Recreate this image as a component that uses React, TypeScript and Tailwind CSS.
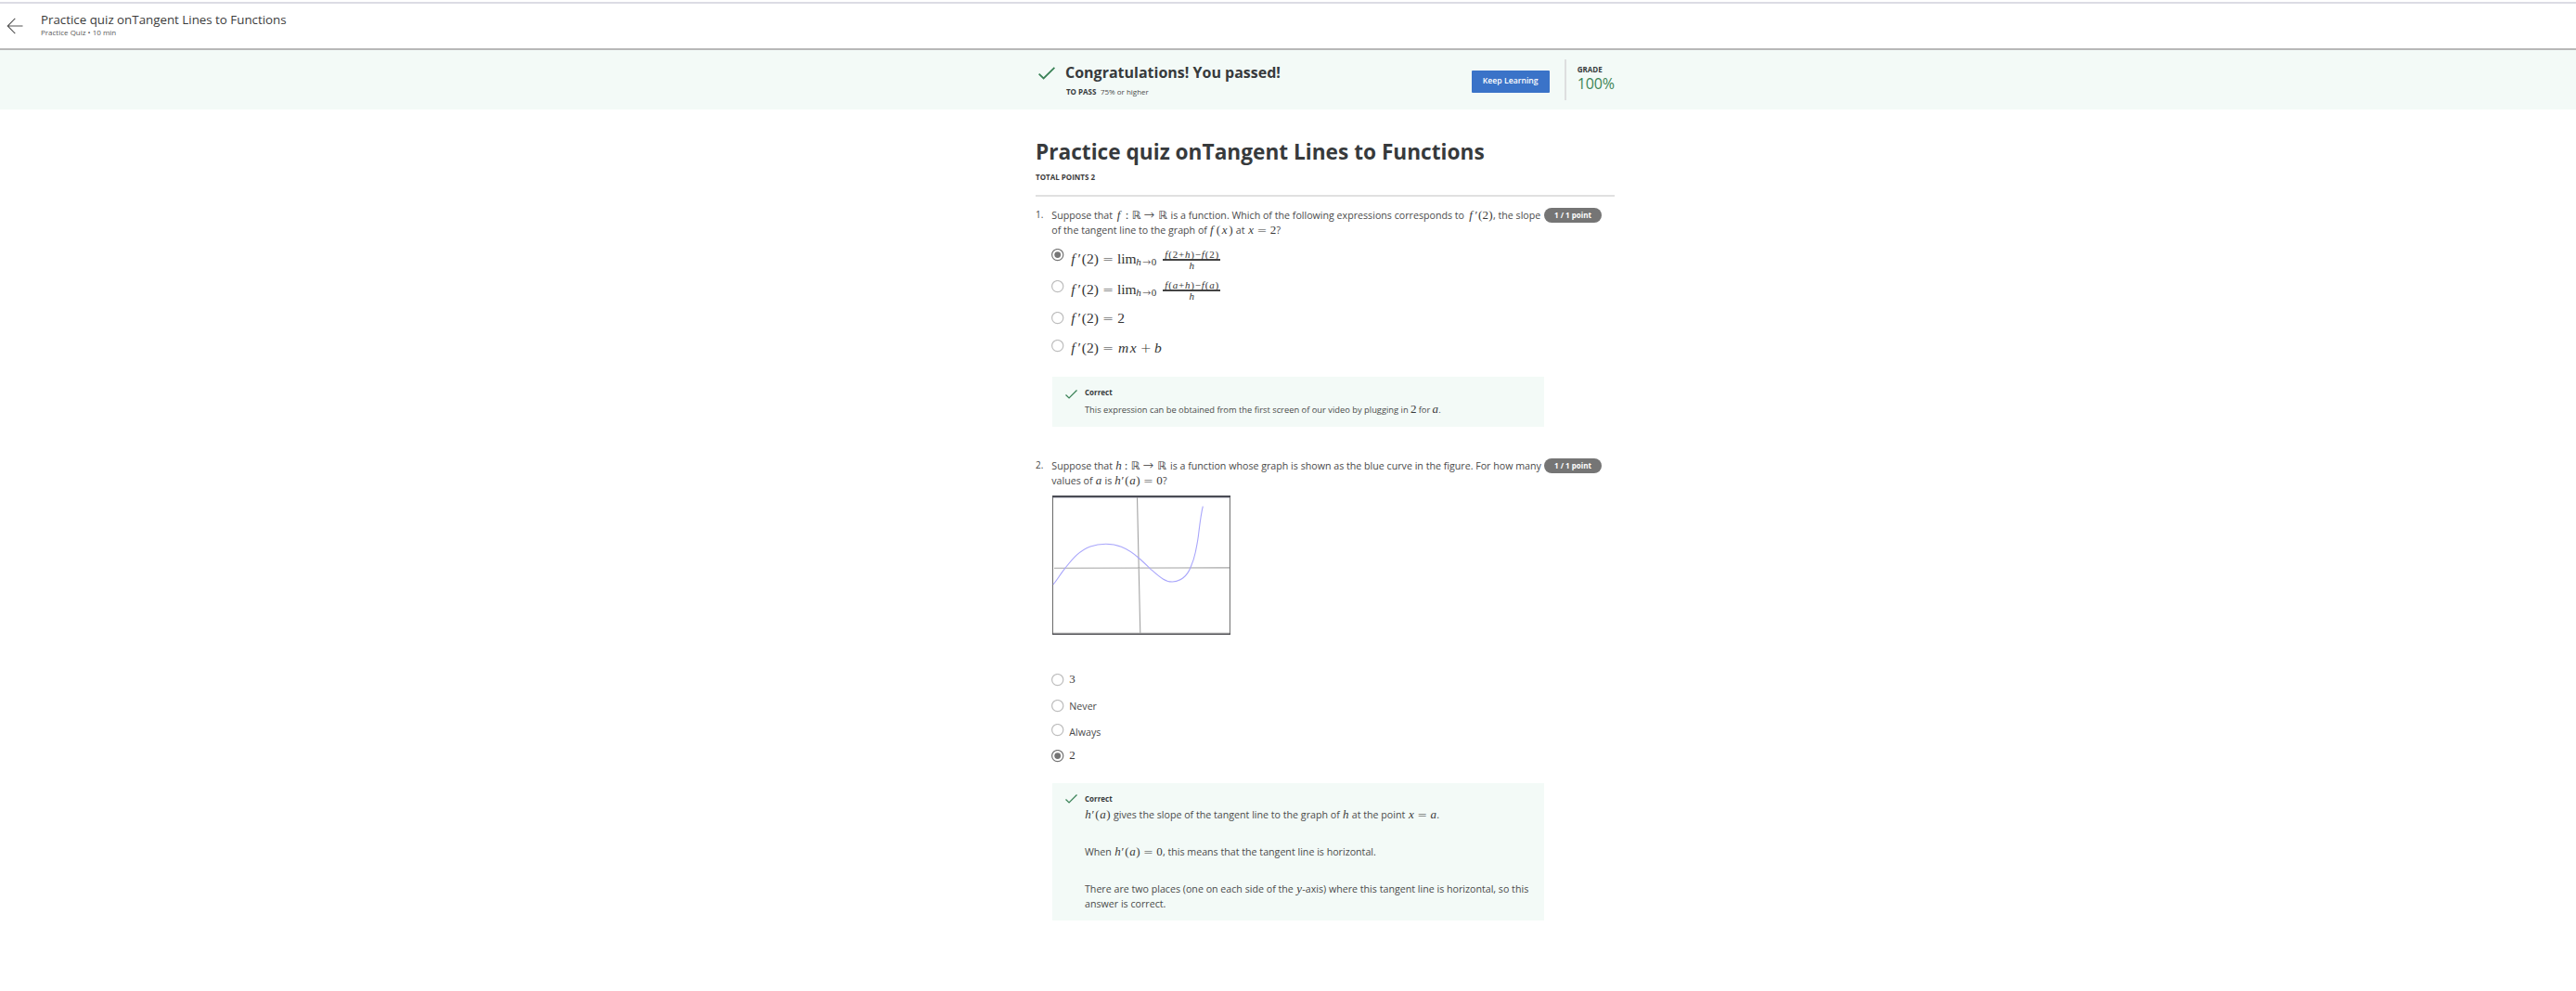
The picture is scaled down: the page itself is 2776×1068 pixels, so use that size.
import React from 'react';

type Kids = { children?: React.ReactNode; className?: string };

/* One glyph group of a formula, centred in a box of fixed width. */
const G = ({ children, className = '' }: Kids) => (
  <span className={`inline-flex shrink-0 justify-center whitespace-nowrap ${className}`}>{children}</span>
);

/* Thin-stroked operators and relations. */
const Op = ({ children, className = '' }: Kids) => (
  <G className={`font-['DejaVu_Sans',sans-serif] font-extralight ${className}`}>{children}</G>
);

const MathRun = ({ children, className = '' }: Kids) => (
  <span className={`flex shrink-0 items-baseline font-['Liberation_Serif',serif] text-[13px] leading-[14px] text-[#3a3a3a] ${className}`}>
    {children}
  </span>
);

const Txt = ({ children, className = '' }: Kids) => (
  <span className={`shrink-0 whitespace-nowrap ${className}`}>{children}</span>
);

const Line = ({ children, className = '' }: Kids) => (
  <div className={`flex h-4 items-baseline leading-4 ${className}`}>{children}</div>
);

const Check = ({ className = '' }: Kids) => (
  <svg viewBox="0 0 18 14" className={className} fill="none" stroke="#3a8257" strokeWidth="1.8">
    <path d="M0.6 7.6 L5.6 12.4 L17.4 0.8" />
  </svg>
);

const Radio = ({ checked }: { checked?: boolean }) => (
  <svg viewBox="0 0 14 14" className="h-[14px] w-[14px] shrink-0" fill="none">
    <circle cx="6.7" cy="6.6" r="6.1" stroke={checked ? '#757575' : '#bdbdbd'} strokeWidth="1.2" />
    {checked && <circle cx="6.7" cy="6.6" r="3.4" fill="#757575" />}
  </svg>
);

const Pill = () => (
  <div className="flex h-4 w-[62px] shrink-0 justify-center rounded-full bg-[#757575] text-[8px] leading-[15px] font-bold text-white">
    1 / 1 point
  </div>
);

const Reals = () => (
  <>
    <G className="w-[7px]">:</G>
    <G className="w-[13px] font-['DejaVu_Sans',sans-serif] text-[12px]">ℝ</G>
    <Op className="w-[15px] text-[14px]">→</Op>
    <G className="w-[14px] font-['DejaVu_Sans',sans-serif] text-[12px]">ℝ</G>
  </>
);

const FPrime = () => (
  <>
    <G className="w-[9px] italic">f</G>
    <G className="w-[5px]">′</G>
    <G className="w-[5px]">(</G>
    <G className="w-[8px]">2</G>
    <G className="w-[5px]">)</G>
    <Op className="w-[20.5px] text-[14.5px]">=</Op>
  </>
);

const HPrime = () => (
  <>
    <G className="w-[7px] italic">h</G>
    <G className="w-[4px]">′</G>
    <G className="w-[5px]">(</G>
    <G className="w-[7px] italic">a</G>
    <G className="w-[5px]">)</G>
  </>
);

const BigMath = ({ children, className = '' }: Kids) => (
  <span className={`ml-[4.5px] flex h-4 items-baseline font-['Liberation_Serif',serif] text-[15.5px] leading-4 text-[#333] ${className}`}>
    {children}
  </span>
);

const LimitOf = ({ arg }: { arg: string }) => (
  <>
    <FPrime />
    <G className="w-[20px]">lim</G>
    <span className="relative top-[2px] flex w-[22px] items-baseline justify-between text-[11px]">
      <i>h</i>
      <Op className="text-[11px]">→</Op>
      <span>0</span>
    </span>
    <span className="relative -top-[6px] ml-[7px] flex w-[62px] flex-col text-[11px] leading-[10px]">
      <span className="flex h-[12px] justify-between border-b-2 border-[#444] px-[2px]">
        <i>f</i>
        <span>(</span>
        <span className={arg === 'a' ? 'italic' : ''}>{arg}</span>
        <span>+</span>
        <i>h</i>
        <span>)</span>
        <span>−</span>
        <i>f</i>
        <span>(</span>
        <span className={arg === 'a' ? 'italic' : ''}>{arg}</span>
        <span>)</span>
      </span>
      <i className="-mb-3 text-center leading-[10px]">h</i>
    </span>
  </>
);

const Graph = () => (
  <svg viewBox="0 0 192 150" className="mt-2 block h-[150px] w-[192px]" fill="none">
    <path d="M0.5 0V150M191.4 0V150" stroke="#6a6a6a" strokeWidth="1" />
    <path d="M1 2.4H191" stroke="#b5b5c0" strokeWidth="0.8" />
    <path d="M0 1H192" stroke="#4a4c54" strokeWidth="1.8" />
    <path d="M1 148.2H191" stroke="#aaa" strokeWidth="0.8" />
    <path d="M0 149.3H192" stroke="#3c3c40" strokeWidth="1.3" />
    <path d="M91.5 2L94.8 149M2 78.3L191 77.9" stroke="#a3a3a3" strokeWidth="1.1" />
    <path
      d="M1 96C5 91 9 84.5 14.3 77.7C18 73 21.5 68.5 26 64.3C31 60 35.5 57 41 55C46.500 53 52 52.3 57.7 52.3C63.500 52.300 69 53.2 74.3 55.3C81 58 87 62 92.7 67C97.500 71 101.500 75 106 79.3C110.500 83.300 114.500 87 119.3 90C122.500 92.300 126 93 129.3 93C133.500 93 137.500 91.500 141 88.7C144.500 86 147.500 81.500 149.3 76.7C151.500 71.500 153.200 66.500 154.3 61C155.700 54 157 48 157.7 41C158.800 32 160.200 20 162.3 11.7"
      stroke="#a9a6fb"
      strokeWidth="1.1"
    />
  </svg>
);

export default function App() {
  return (
    <div className="flex h-[1068px] w-[2776px] flex-col overflow-hidden bg-white font-['Open_Sans',sans-serif] text-[10.67px] text-[#4a4a4a]">
      <header className="mt-[2px] flex h-[52px] shrink-0 border-t-2 border-b-2 border-t-[#dcdce4] border-b-[#b8b8b8]">
        <svg viewBox="0 0 18 18" className="mt-[15px] ml-[7px] h-[18px] w-[18px]" fill="none" stroke="#555" strokeWidth="1.1">
          <path d="M17.5 9H1.2M9.3 0.9L1.2 9L9.3 17.1" />
        </svg>
        <div className="ml-[19px] flex flex-col">
          <h1 className="mt-[9px] text-[13.33px] leading-4 text-[#3c3c3c]">Practice quiz onTangent Lines to Functions</h1>
          <p className="text-[8px] leading-3 text-[#5a5a5a]">Practice Quiz • 10 min</p>
        </div>
      </header>

      <section className="flex h-16 shrink-0 bg-[#f3faf7]">
        <div className="ml-[1116px] flex w-[624px]">
          <Check className="mt-[18px] ml-[3px] h-[14px] w-[18px]" />
          <div className="ml-[11px] w-[438px]">
            <h2 className="mt-[14px] text-[16px] leading-5 font-bold text-[#373a3c]">Congratulations! You passed!</h2>
            <p className="mt-[5px] flex gap-[4.5px] pl-[1px] text-[8px] leading-3">
              <b className="text-[#373a3c]">TO PASS</b>
              <span>75% or higher</span>
            </p>
          </div>
          <button className="mt-[22px] h-6 w-[84px] rounded-[1px] bg-[#3a73c8] pb-[2px] text-[8.67px] font-semibold text-white">
            Keep Learning
          </button>
          <div className="mt-[10px] ml-4 h-11 w-[2px] bg-[#dedfdf]" />
          <div className="ml-[12px]">
            <div className="mt-[15px] text-[8px] leading-3 font-bold text-[#373a3c]">GRADE</div>
            <div className="-mt-px text-[16px] leading-5 tracking-[-0.1px] text-[#3d8456]">100%</div>
          </div>
        </div>
      </section>

      <main className="ml-[1116px] flex w-[624px] flex-col">
        <h1 className="mt-[31px] h-[30px] text-[22.67px] leading-[30px] font-bold whitespace-nowrap text-[#373a3c]">
          Practice quiz onTangent Lines to Functions
        </h1>
        <p className="mt-[6px] text-[8px] leading-3 font-bold text-[#3c3c3c]">TOTAL POINTS 2</p>
        <div className="mt-[13px] h-[2px] bg-[#e0e0e0]" />

        <section className="mt-3 flex">
          <div className="w-[17.3px] shrink-0 text-[10px] leading-[15px]">1.</div>
          <div className="w-[530.7px] shrink-0">
            <Line>
              <Txt className="w-[67.7px]">Suppose that</Txt>
              <MathRun>
                <G className="w-[9px] italic">f</G>
                <G className="w-[1px]" />
                <Reals />
              </MathRun>
              <Txt className="w-[321px] pl-[1.5px]">is a function. Which of the following expressions corresponds to</Txt>
              <MathRun>
                <G className="w-[8px] italic">f</G>
                <G className="w-[4px]">′</G>
                <G className="w-[4.5px]">(</G>
                <G className="w-[6.5px]">2</G>
                <G className="w-[5px]">)</G>
              </MathRun>
              <Txt>, the slope</Txt>
            </Line>
            <Line>
              <Txt className="w-[168px]">of the tangent line to the graph of</Txt>
              <MathRun>
                <G className="w-[9px] italic">f</G>
                <G className="w-[5px]">(</G>
                <G className="w-[8.5px] italic">x</G>
                <G className="w-[5px]">)</G>
              </MathRun>
              <Txt className="pr-[3px] pl-[3px]">at</Txt>
              <MathRun>
                <G className="w-[7px] italic">x</G>
                <Op className="w-[17px] text-[13px]">=</Op>
                <G className="w-[7px]">2</G>
              </MathRun>
              <Txt>?</Txt>
            </Line>

            <div className="mt-3 flex h-[34px]">
              <Radio checked />
              <BigMath className="mt-[3px]">
                <LimitOf arg="2" />
              </BigMath>
            </div>
            <div className="flex h-[34px]">
              <Radio />
              <BigMath className="mt-[2px]">
                <LimitOf arg="a" />
              </BigMath>
            </div>
            <div className="flex h-[30px]">
              <Radio />
              <BigMath className="-mt-px">
                <FPrime />
                <G>2</G>
              </BigMath>
            </div>
            <div className="flex h-10">
              <Radio />
              <BigMath className="mt-[1px]">
                <FPrime />
                <G className="w-[12.5px] italic">m</G>
                <G className="w-[9px] italic">x</G>
                <Op className="w-[18px] text-[14.5px]">+</Op>
                <G className="w-[8px] italic">b</G>
              </BigMath>
            </div>

            <div className="ml-[0.7px] flex h-[54px] bg-[#f3faf7]">
              <Check className="mt-[14px] ml-[14.5px] h-[10px] w-[13px]" />
              <div className="ml-[7.5px] pt-[11px]">
                <div className="text-[8px] leading-3 font-bold text-[#373a3c]">Correct</div>
                <Line className="mt-[5px] text-[9.33px]">
                  <Txt>This expression can be obtained from the first screen of our video by plugging in</Txt>
                  <MathRun className="text-[12px]">
                    <G className="w-[11px]">2</G>
                  </MathRun>
                  <Txt>for</Txt>
                  <MathRun className="text-[12px]">
                    <G className="w-[9px] pl-[2px] italic">a</G>
                  </MathRun>
                  <Txt>.</Txt>
                </Line>
              </div>
            </div>
          </div>
          <Pill />
        </section>

        <section className="mt-[34px] flex">
          <div className="w-[17.3px] shrink-0 text-[10px] leading-[15px]">2.</div>
          <div className="w-[530.7px] shrink-0">
            <Line>
              <Txt className="w-[67.7px]">Suppose that</Txt>
              <MathRun>
                <G className="w-[9px] italic">h</G>
                <Reals />
              </MathRun>
              <Txt className="pl-[2px]">
                is a function whose graph is shown as the blue curve in the figure. For how many
              </Txt>
            </Line>
            <Line>
              <Txt>values of</Txt>
              <MathRun>
                <G className="w-[13px] italic">a</G>
              </MathRun>
              <Txt className="pr-[2.5px]">is</Txt>
              <MathRun>
                <HPrime />
                <Op className="w-[17px] text-[13px]">=</Op>
                <G className="w-[7px]">0</G>
              </MathRun>
              <Txt>?</Txt>
            </Line>
            <div className="pl-[0.7px]">
              <Graph />
            </div>

            <div className="mt-[42px] flex h-7">
              <Radio />
              <MathRun className="-mt-[1px] ml-[5px] h-4 leading-4">3</MathRun>
            </div>
            <div className="flex h-[26px]">
              <Radio />
              <Txt className="-mt-[1px] ml-[5px] leading-4">Never</Txt>
            </div>
            <div className="flex h-7">
              <Radio />
              <Txt className="mt-[1px] ml-[5px] leading-4">Always</Txt>
            </div>
            <div className="flex h-9">
              <Radio checked />
              <MathRun className="-mt-[1px] ml-[5px] h-4 leading-4">2</MathRun>
            </div>

            <div className="ml-[0.7px] flex h-[148px] bg-[#f3faf7]">
              <Check className="mt-[12px] ml-[14.5px] h-[10px] w-[13px]" />
              <div className="ml-[7.5px] pt-[11px]">
                <div className="text-[8px] leading-3 font-bold text-[#373a3c]">Correct</div>
                <Line className="mt-[3px]">
                  <MathRun>
                    <HPrime />
                  </MathRun>
                  <Txt className="pl-[3px]">gives the slope of the tangent line to the graph of</Txt>
                  <MathRun>
                    <G className="w-[13px] italic">h</G>
                  </MathRun>
                  <Txt className="pr-[3px]">at the point</Txt>
                  <MathRun>
                    <G className="w-[7px] italic">x</G>
                    <Op className="w-[17px] text-[13px]">=</Op>
                    <G className="w-[7px] italic">a</G>
                  </MathRun>
                  <Txt>.</Txt>
                </Line>
                <Line className="mt-6">
                  <Txt className="pr-[3px]">When</Txt>
                  <MathRun>
                    <HPrime />
                    <Op className="w-[17px] text-[13px]">=</Op>
                    <G className="w-[7px]">0</G>
                  </MathRun>
                  <Txt>, this means that the tangent line is horizontal.</Txt>
                </Line>
                <Line className="mt-6">
                  <Txt className="pr-[3px]">There are two places (one on each side of the</Txt>
                  <MathRun>
                    <G className="w-[6.5px] italic">y</G>
                  </MathRun>
                  <Txt>-axis) where this tangent line is horizontal, so this</Txt>
                </Line>
                <Line>
                  <Txt>answer is correct.</Txt>
                </Line>
              </div>
            </div>
          </div>
          <Pill />
        </section>
      </main>
    </div>
  );
}
